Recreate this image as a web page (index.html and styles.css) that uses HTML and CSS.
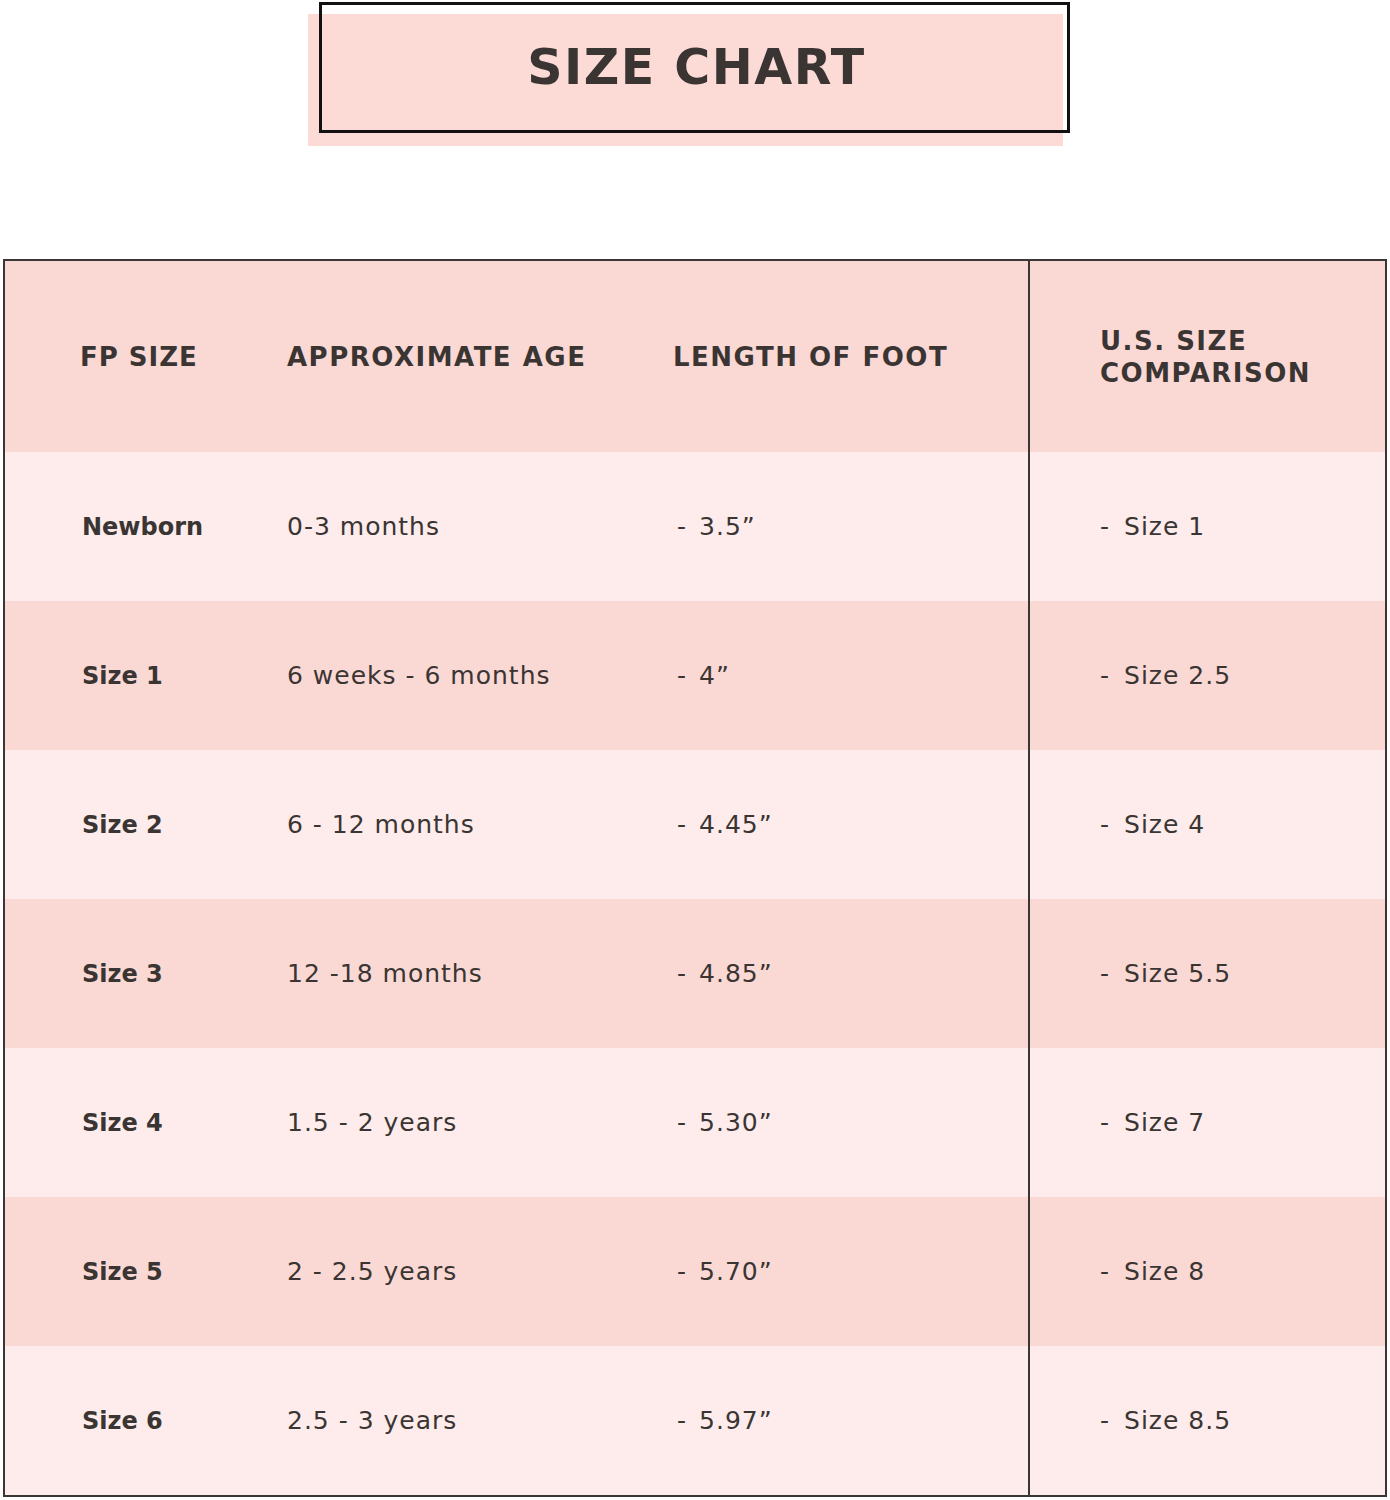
FILE: index.html
```html
<!DOCTYPE html>
<html>
<head>
<meta charset="utf-8">
<link rel="stylesheet" href="styles.css">
</head>
<body>
<div class="title-box"><h1 class="title">SIZE CHART</h1></div>
<div class="chart">
  <div class="row head">
    <div class="c c1">FP SIZE</div>
    <div class="c c2">APPROXIMATE AGE</div>
    <div class="c c3">LENGTH OF FOOT</div>
    <div class="c c4">U.S. SIZE<br>COMPARISON</div>
  </div>
  <div class="row light">
    <div class="c c1">Newborn</div><div class="c c2">0-3 months</div><div class="c c3"><span class="dash">-</span>3.5”</div><div class="c c4"><span class="dash">-</span>Size 1</div>
  </div>
  <div class="row dark">
    <div class="c c1">Size 1</div><div class="c c2">6 weeks - 6 months</div><div class="c c3"><span class="dash">-</span>4”</div><div class="c c4"><span class="dash">-</span>Size 2.5</div>
  </div>
  <div class="row light">
    <div class="c c1">Size 2</div><div class="c c2">6 - 12 months</div><div class="c c3"><span class="dash">-</span>4.45”</div><div class="c c4"><span class="dash">-</span>Size 4</div>
  </div>
  <div class="row dark">
    <div class="c c1">Size 3</div><div class="c c2">12 -18 months</div><div class="c c3"><span class="dash">-</span>4.85”</div><div class="c c4"><span class="dash">-</span>Size 5.5</div>
  </div>
  <div class="row light">
    <div class="c c1">Size 4</div><div class="c c2">1.5 - 2 years</div><div class="c c3"><span class="dash">-</span>5.30”</div><div class="c c4"><span class="dash">-</span>Size 7</div>
  </div>
  <div class="row dark">
    <div class="c c1">Size 5</div><div class="c c2">2 - 2.5 years</div><div class="c c3"><span class="dash">-</span>5.70”</div><div class="c c4"><span class="dash">-</span>Size 8</div>
  </div>
  <div class="row light">
    <div class="c c1">Size 6</div><div class="c c2">2.5 - 3 years</div><div class="c c3"><span class="dash">-</span>5.97”</div><div class="c c4"><span class="dash">-</span>Size 8.5</div>
  </div>
</div>
</body>
</html>
```
FILE: styles.css
```css
html { background: #fff; }
body {
  margin: 0;
  padding: 0;
  font-family: "DejaVu Sans", "Open Sans", sans-serif;
  color: #3a3533;
  width: 1390px;
}
.title-box {
  position: relative;
  box-sizing: border-box;
  margin: 2px 0 0 319px;
  width: 751px;
  height: 131px;
  border: 3px solid #111;
  display: flex;
  align-items: center;
  justify-content: center;
}
.title-box::before {
  content: "";
  position: absolute;
  left: -14px;
  top: 9px;
  width: 755px;
  height: 132px;
  background: #fcdad6;
  z-index: -1;
}
.title {
  margin: 0 0 0 4px;
  font-size: 49px;
  font-weight: 700;
  letter-spacing: 1.5px;
  line-height: 1;
}
.chart {
  box-sizing: border-box;
  margin: 126px 0 0 3px;
  width: 1384px;
  border: 2px solid #3a3636;
}
.row {
  display: grid;
  grid-template-columns: 282px 386px 355px 1fr;
  height: 149px;
}
.row.head { height: 191px; background: #fad9d5; }
.row.dark { background: #fad9d5; }
.row.light { background: #fdeceb; }
.c {
  display: flex;
  align-items: center;
  font-size: 25px;
  letter-spacing: 1px;
  white-space: nowrap;
}
.c1 { padding-left: 77px; font-weight: 700; font-size: 24px; letter-spacing: 0; }
.c2 { padding-left: 0; }
.c3 { padding-left: 4px; }
.c4 { padding-left: 70px; border-left: 2px solid #3a3636; }
.c3 .dash { margin-right: 12px; }
.c4 .dash { margin-right: 14px; }
.head .c {
  font-size: 26px;
  font-weight: 700;
  letter-spacing: 1.5px;
  line-height: 32px;
}
.head .c1 { padding-left: 75px; letter-spacing: 1px; }
.head .c3 { padding-left: 0; }
```
